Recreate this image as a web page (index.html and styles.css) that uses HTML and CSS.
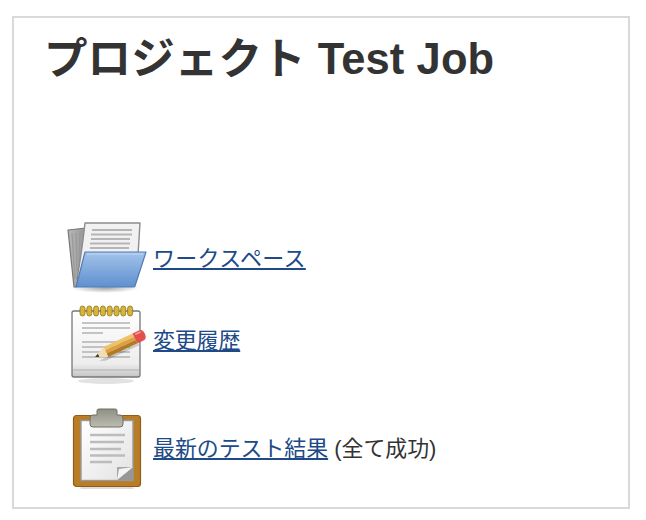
FILE: index.html
```html
<!DOCTYPE html>
<html lang="ja">
<head>
    <meta charset="UTF-8">
    <title>プロジェクト Test Job</title>
    <link rel="stylesheet" href="styles.css">
</head>
<body>

    <div class="panel">
        <h1 class="title">プロジェクト Test Job</h1>

        <div class="links">
            <div class="link-row row-workspace">
                <svg class="icon" width="80" height="72" viewBox="0 0 80 72">
                    <defs>
                        <linearGradient id="folderBlue" x1="0" y1="0" x2="0" y2="1">
                            <stop offset="0" stop-color="#a3c3ea"/>
                            <stop offset="1" stop-color="#5f90cf"/>
                        </linearGradient>
                        <linearGradient id="folderBack" x1="0" y1="0" x2="1" y2="0">
                            <stop offset="0" stop-color="#b8b8b8"/>
                            <stop offset="1" stop-color="#7f7f7f"/>
                        </linearGradient>
                        <radialGradient id="shadow1">
                            <stop offset="0" stop-color="#777" stop-opacity=".65"/>
                            <stop offset="1" stop-color="#777" stop-opacity="0"/>
                        </radialGradient>
                    </defs>
                    <ellipse cx="38" cy="67" rx="34" ry="5" fill="url(#shadow1)"/>
                    <path d="M1 9 L19 7 L30 7 L22 40 L9 66 L7 66 Z" fill="url(#folderBack)" stroke="#777" stroke-width="1.2" stroke-linejoin="round"/>
                    <path d="M5 12 L8 58 M9 12 L10 50 M13 11 L12 42" stroke="#9a9a9a" stroke-width="1.2" fill="none"/>
                    <path d="M18 2 L73 2 L71 34 L20 50 L10 58 Q15 30 18 2 Z" fill="#f1f1f1" stroke="#8c8c8c" stroke-width="1.4" stroke-linejoin="round"/>
                    <path d="M25 9 H65 M24 13.500 H65 M24 18 H63 M23 22.500 H63 M23 27 H62" stroke="#b5b5b5" stroke-width="1.8" fill="none"/>
                    <path d="M18 31 L79 31 L68 65 Q68 66 66 66 L9 66 Z" fill="url(#folderBlue)" stroke="#4f7cb8" stroke-width="1.2" stroke-linejoin="round"/>
                    <path d="M20 33 L76 33" stroke="#c3d7f0" stroke-width="1.2"/>
                </svg>
                <a href="#" class="link">ワークスペース</a>
            </div>

            <div class="link-row row-changes">
                <svg class="icon" width="80" height="80" viewBox="0 0 80 80">
                    <defs>
                        <linearGradient id="padGrey" x1="0" y1="0" x2="0" y2="1">
                            <stop offset="0" stop-color="#ffffff"/>
                            <stop offset=".8" stop-color="#ededed"/>
                            <stop offset="1" stop-color="#c4c4c4"/>
                        </linearGradient>
                    </defs>
                    <ellipse cx="39" cy="77" rx="28" ry="3" fill="#e2e2e2"/>
                    <rect x="5" y="7" width="68" height="66" rx="2" fill="url(#padGrey)" stroke="#777" stroke-width="1.300"/>
                    <path d="M6 66 H72" stroke="#b0b0b0" stroke-width="1"/>
                    <g fill="#d6b53a" stroke="#8f7416" stroke-width=".8">
                        <rect x="13" y="2" width="5" height="10" rx="2.500"/>
                        <rect x="19.800" y="2" width="5" height="10" rx="2.500"/>
                        <rect x="26.600" y="2" width="5" height="10" rx="2.500"/>
                        <rect x="33.400" y="2" width="5" height="10" rx="2.500"/>
                        <rect x="40.200" y="2" width="5" height="10" rx="2.500"/>
                        <rect x="47" y="2" width="5" height="10" rx="2.500"/>
                        <rect x="53.800" y="2" width="5" height="10" rx="2.500"/>
                        <rect x="60.600" y="2" width="5" height="10" rx="2.500"/>
                    </g>
                    <path d="M15 19 H63 M15 24 H63 M15 29 H36 M15 38 H63 M15 43 H63 M15 48 H63 M15 53 H63" stroke="#b3b3b3" stroke-width="1.600" fill="none"/>
                    <g transform="translate(28 53) rotate(-25)">
                        <path d="M2 5 L45 6 L45 8 L8 8 Z" fill="#000" opacity=".18"/>
                        <path d="M12 -5.500 H44 V-1.800 H12 Z" fill="#f0c268"/>
                        <path d="M12 -1.800 H44 V1.800 H12 Z" fill="#dca040"/>
                        <path d="M12 1.800 H44 V5.500 H12 Z" fill="#b27a24"/>
                        <path d="M0 0 L12 -5.500 V5.500 Z" fill="#f2ddb2"/>
                        <path d="M0 0 L4 -1.800 V1.800 Z" fill="#4a3a20"/>
                        <path d="M44 -5.500 H51 Q55 -5.500 55 0 Q55 5.500 51 5.500 H44 Z" fill="#e2504c"/>
                        <path d="M46 -3.500 H52" stroke="#f4a6a0" stroke-width="1.600"/>
                    </g>
                </svg>
                <a href="#" class="link">変更履歴</a>
            </div>

            <div class="link-row row-tests">
                <svg class="icon" width="80" height="82" viewBox="0 0 80 82">
                    <defs>
                        <linearGradient id="sheet" x1="0" y1="0" x2="1" y2="1">
                            <stop offset="0" stop-color="#ffffff"/>
                            <stop offset="1" stop-color="#e2e2e2"/>
                        </linearGradient>
                        <linearGradient id="clip" x1="0" y1="0" x2="0" y2="1">
                            <stop offset="0" stop-color="#8f8f84"/>
                            <stop offset="1" stop-color="#bcbcb0"/>
                        </linearGradient>
                    </defs>
                    <ellipse cx="40" cy="81" rx="28" ry="2" fill="#ddd"/>
                    <rect x="6.500" y="8.500" width="67" height="71" rx="3" fill="#b87e27" stroke="#8e5e17" stroke-width="1.200"/>
                    <rect x="14" y="13.500" width="52" height="60" fill="url(#sheet)" stroke="#9a9a9a" stroke-width="1.400"/>
                    <path d="M23 28 H58 M23 35 H57 M23 42 H54 M23 48.500 H58 M23 55 H45" stroke="#bcbcbc" stroke-width="2.400" fill="none"/>
                    <path d="M50 73 L66 60 L66 73 Z" fill="#979797"/>
                    <path d="M50 73 L50 60 L66 60 Z" fill="#a6a6a6"/>
                    <path d="M50 73 L66 60 L52 62 Z" fill="#f4f4f4"/>
                    <path d="M30 8 L30 3.500 Q30 2 32 2 L48 2 Q50 2 50 3.500 L50 8 L53 8 Q56 8 56 11 L56 17 Q56 20 53 20 L26 20 Q23 20 23 17 L23 11 Q23 8 26 8 Z" fill="url(#clip)" stroke="#6f6f66" stroke-width="1"/>
                </svg>
                <span class="link-text"><a href="#" class="link">最新のテスト結果</a> (全て成功)</span>
            </div>
        </div>
    </div>

</body>
</html>
```

FILE: styles.css
```css
html, body {
    margin: 0;
    padding: 0;
    background-color: #fff;
}
body {
    font-family: "Liberation Sans", Arial, "Noto Sans CJK JP", sans-serif;
    color: #333;
    padding: 16px 16px 0 12px;
}
.panel {
    box-sizing: border-box;
    height: 493px;
    border: 2px solid #d9d9d9;
    padding: 0 0 0 32px;
}
.title {
    margin: 0;
    padding-top: 11px;
    font-size: 43.5px;
    line-height: 60px;
    font-weight: bold;
    margin-left: -2px;
    letter-spacing: 0.1px;
}
.links {
    padding-top: 132px;
    padding-left: 21px;
}
.link-row {
    display: flex;
    align-items: center;
    font-size: 22px;
    line-height: 30px;
}
.icon {
    flex: none;
    margin-right: 6px;
    filter: blur(0.4px);
}
.row-workspace {
    height: 72px;
}
.row-workspace .link {
    margin-top: 4px;
    letter-spacing: 0.3px;
}
.row-changes {
    height: 80px;
    margin-top: 11px;
}
.row-changes .link {
    margin-bottom: 6px;
    letter-spacing: -0.2px;
}
.row-tests {
    height: 82px;
    margin-top: 23px;
}
.link-text {
    margin-top: 2px;
    font-size: 21.9px;
}
.link {
    color: #204a87;
    text-decoration: underline;
}
```
